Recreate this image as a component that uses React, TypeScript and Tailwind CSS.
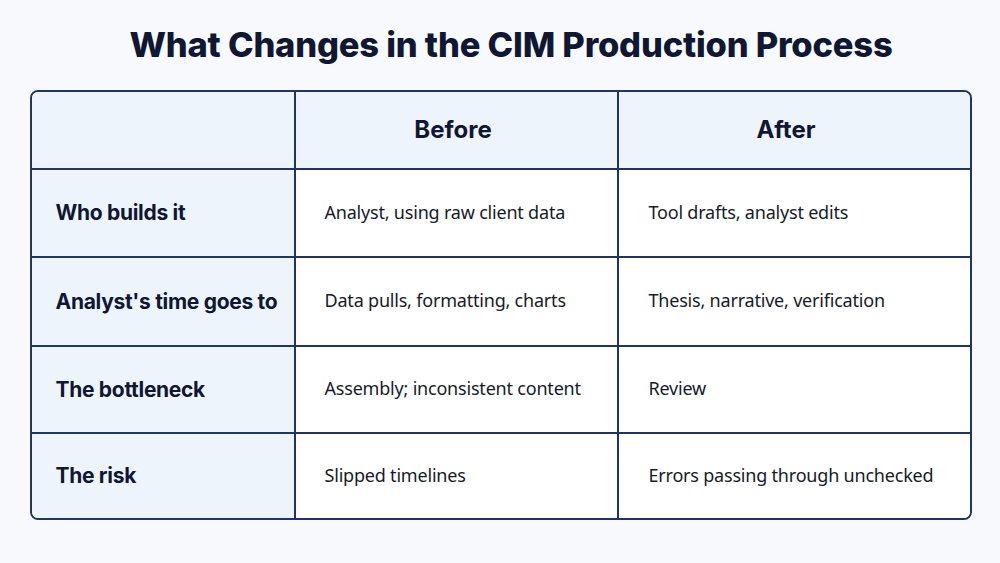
import React from "react";

const rows = [
  ["Who builds it", "Analyst, using raw client data", "Tool drafts, analyst edits"],
  ["Analyst's time goes to", "Data pulls, formatting, charts", "Thesis, narrative, verification"],
  ["The bottleneck", "Assembly; inconsistent content", "Review"],
  ["The risk", "Slipped timelines", "Errors passing through unchecked"],
];

const heights = ["h-[88px]", "h-[89px]", "h-[87px]", "h-[86px]"];

export default function App() {
  return (
    <div className="w-[1000px] h-[563px] bg-[#f7f9fc] flex flex-col items-center overflow-hidden">
      <h1
        className="mt-[22px] ml-[22px] h-[46px] text-[34.5px] leading-[46px] font-extrabold text-[#0f1733] tracking-[-0.2px]"
        style={{ fontFamily: "Inter, 'Noto Sans', sans-serif" }}
      >
        What Changes in the CIM Production Process
      </h1>
      <div
        className="mt-[22px] w-[942px] ml-[1px] rounded-[8px] border-2 border-[#1f3566] overflow-hidden"
        style={{ fontFamily: "'Noto Sans', sans-serif" }}
      >
        <div className="grid grid-cols-[264px_323px_1fr] h-[76px] bg-[#eef4fc]">
          <div className="border-r-2 border-[#1f3566]" />
          <div className="border-r-2 border-[#1f3566] flex items-center justify-center pr-[6px] text-[24px] font-bold text-[#0f1733]" style={{ fontFamily: "Inter, sans-serif" }}>
            Before
          </div>
          <div className="flex items-center justify-center pr-[16px] text-[24px] font-bold text-[#0f1733]" style={{ fontFamily: "Inter, sans-serif" }}>
            After
          </div>
        </div>
        {rows.map((r, i) => (
          <div key={i} className={`grid grid-cols-[264px_323px_1fr] border-t-2 border-[#1f3566] ${heights[i]}`}>
            <div
              className="bg-[#eef4fc] border-r-2 border-[#1f3566] flex items-center pl-[24px] text-[21px] font-bold text-[#0f1733] tracking-[-0.3px]"
              style={{ fontFamily: "Inter, sans-serif" }}
            >
              {r[0]}
            </div>
            <div className="bg-white border-r-2 border-[#1f3566] flex items-center pl-[29px] pb-[2px] text-[18px] text-[#161b29] tracking-[-0.2px]">
              {r[1]}
            </div>
            <div className="bg-white flex items-center pl-[30px] pb-[2px] text-[18px] text-[#161b29] tracking-[-0.2px]">
              {r[2]}
            </div>
          </div>
        ))}
      </div>
    </div>
  );
}
